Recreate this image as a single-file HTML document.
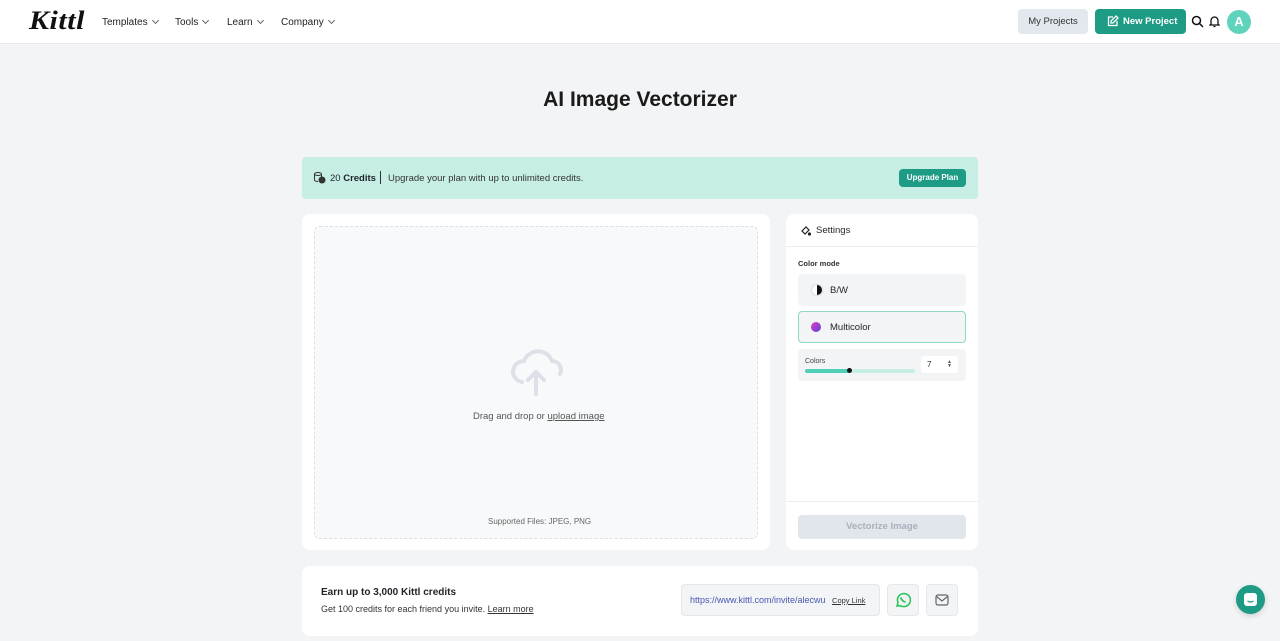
<!DOCTYPE html>
<html><head><meta charset="utf-8"><style>
*{box-sizing:border-box;margin:0;padding:0}
body{width:1280px;height:641px;overflow:hidden;background:#f3f4f6;font-family:"Liberation Sans",sans-serif;color:#1f2328;position:relative}
.nav{position:absolute;top:0;left:0;width:1280px;height:44px;background:#fff;border-bottom:1px solid #e5e7eb}
.abs{position:absolute}
.menu{font-size:10px;color:#222;top:16px}
.chev{display:inline-block;width:5px;height:5px;border-right:1px solid #666;border-bottom:1px solid #666;transform:rotate(45deg);margin-left:5px;position:relative;top:-2px}
.card{background:#fff;border-radius:8px;position:absolute}
</style></head><body>
<div class="nav">
<div class="abs" style="left:29px;top:6px;font-family:'Liberation Serif',serif;font-style:italic;font-weight:bold;font-size:26px;letter-spacing:0.5px;color:#111;transform:scaleX(1.15);transform-origin:left">Kittl</div>
<div class="abs menu" style="left:102px;top:17px">Templates<span class="chev"></span></div>
<div class="abs menu" style="left:175px;top:17px">Tools<span class="chev"></span></div>
<div class="abs menu" style="left:227px;top:17px">Learn<span class="chev"></span></div>
<div class="abs menu" style="left:281px;top:17px">Company<span class="chev"></span></div>
<div class="abs" style="left:1018px;top:9px;width:70px;height:25px;background:#e3e7ee;border-radius:4px;font-size:9.5px;text-align:center;line-height:25px;color:#333">My Projects</div>
<div class="abs" style="left:1095px;top:9px;width:91px;height:25px;background:#1d9b85;border-radius:4px;font-size:9.5px;font-weight:bold;color:#fff;line-height:25px;padding-left:28px">New Project</div>
<svg class="abs" style="left:1107px;top:15px" width="12" height="12" viewBox="0 0 12 12" fill="none" stroke="#fff" stroke-width="1.3"><path d="M10 6v4.5H1.5V2H6"/><path d="M9 1l2 2-5 5H4V6z"/></svg>
<svg class="abs" style="left:1191px;top:15px" width="13" height="13" viewBox="0 0 13 13" fill="none" stroke="#111" stroke-width="1.5"><circle cx="5.5" cy="5.5" r="4"/><path d="M8.5 8.5l3.5 3.5"/></svg>
<svg class="abs" style="left:1209px;top:15px" width="11" height="13" viewBox="0 0 11 13" fill="none" stroke="#111" stroke-width="1.3"><path d="M2 9V5.5a3.5 3.5 0 017 0V9l1 1H1z"/><path d="M4.5 11.5h2"/></svg>
<div class="abs" style="left:1227px;top:10px;width:24px;height:24px;border-radius:50%;background:#5fd3bb;color:#fff;font-weight:bold;font-size:13px;text-align:center;line-height:24px">A</div>
</div>
<div class="abs" style="left:0;width:1280px;top:88px;text-align:center;font-size:21px;font-weight:bold;color:#1a1a1a">AI Image Vectorizer</div>
<div class="abs" style="left:302px;top:157px;width:676px;height:42px;background:#c6eee4;border-radius:4px"></div>
<svg class="abs" style="left:313px;top:171px" width="13" height="13" viewBox="0 0 13 13" fill="none" stroke="#333" stroke-width="1"><ellipse cx="5" cy="3" rx="3.5" ry="1.5"/><path d="M1.5 3v6c0 .8 1.5 1.5 3.5 1.5M8.5 3v3"/><circle cx="9" cy="9" r="3" fill="#333"/></svg>
<div class="abs" style="left:330px;top:173px;font-size:9.5px">20 <b>Credits</b></div>
<div class="abs" style="left:380px;top:171px;width:1px;height:13px;background:#333"></div>
<div class="abs" style="left:388px;top:173px;font-size:9.5px;color:#333">Upgrade your plan with up to unlimited credits.</div>
<div class="abs" style="left:899px;top:169px;width:67px;height:18px;background:#1d9b85;border-radius:4px;color:#fff;font-size:8px;font-weight:bold;text-align:center;line-height:18px">Upgrade Plan</div>
<div class="card" style="left:302px;top:214px;width:468px;height:336px"></div>
<div class="abs" style="left:314px;top:226px;width:444px;height:313px;border:1px dashed #dde0e5;border-radius:6px;background:#f8f9fa"></div>
<svg class="abs" style="left:510px;top:348px" width="54" height="48" viewBox="0 0 54 48" fill="none" stroke="#dde1e7" stroke-width="4" stroke-linecap="round"><path d="M12 34A11 11 0 013 24a11 11 0 0111-11 15 15 0 0128 0 9 9 0 018 13"/><path d="M26 46V25M18 32l8-8 8 8"/></svg>
<div class="abs" style="left:473px;top:411px;font-size:9.5px;color:#555">Drag and drop or <u>upload image</u></div>
<div class="abs" style="left:488px;top:517px;font-size:8px;color:#666">Supported Files: JPEG, PNG</div>
<div class="card" style="left:786px;top:214px;width:192px;height:336px"></div>
<div class="abs" style="left:786px;top:246px;width:192px;height:1px;background:#eceef1"></div>
<svg class="abs" style="left:800px;top:225px" width="11" height="11" viewBox="0 0 11 11" fill="none" stroke="#222" stroke-width="1.2"><path d="M2 6l4-4 3 3-4 4z"/><circle cx="9.5" cy="9" r="1" fill="#222"/></svg>
<div class="abs" style="left:816px;top:225px;font-size:9.5px">Settings</div>
<div class="abs" style="left:798px;top:259px;font-size:7.5px;font-weight:bold;color:#333">Color mode</div>
<div class="abs" style="left:798px;top:274px;width:168px;height:32px;background:#f3f4f6;border-radius:4px"></div>
<div class="abs" style="left:812px;top:285px;width:10px;height:10px;border-radius:50%;background:linear-gradient(90deg,#fff 50%,#111 50%);box-shadow:0 0 2px #aaa"></div>
<div class="abs" style="left:830px;top:285px;font-size:9.5px">B/W</div>
<div class="abs" style="left:798px;top:311px;width:168px;height:32px;background:#f3f4f6;border:1px solid #8dd8c7;border-radius:4px"></div>
<div class="abs" style="left:811px;top:322px;width:10px;height:10px;border-radius:50%;background:linear-gradient(135deg,#e040c0,#6040e0)"></div>
<div class="abs" style="left:830px;top:322px;font-size:9.5px">Multicolor</div>
<div class="abs" style="left:798px;top:349px;width:168px;height:32px;background:#f3f4f6;border-radius:4px"></div>
<div class="abs" style="left:805px;top:358px;font-size:7px;color:#444">Colors</div>
<div class="abs" style="left:805px;top:369px;width:110px;height:4px;background:#c6eee4;border-radius:2px"></div>
<div class="abs" style="left:805px;top:369px;width:44px;height:4px;background:#4fcfb5;border-radius:2px"></div>
<div class="abs" style="left:847px;top:368px;width:5px;height:5px;background:#111;border-radius:50%"></div>
<div class="abs" style="left:921px;top:356px;width:37px;height:17px;background:#fff;border-radius:3px;font-size:8px;padding:4px 6px">7<span style="float:right;font-size:5px;line-height:4px;color:#555">▲<br>▼</span></div>
<div class="abs" style="left:786px;top:501px;width:192px;height:1px;background:#eceef1"></div>
<div class="abs" style="left:798px;top:515px;width:168px;height:24px;background:#e1e5ec;border-radius:4px;color:#a9b0bb;font-size:9.5px;font-weight:bold;text-align:center;line-height:24px">Vectorize Image</div>
<div class="card" style="left:302px;top:566px;width:676px;height:70px"></div>
<div class="abs" style="left:321px;top:587px;font-size:10px;font-weight:bold">Earn up to 3,000 Kittl credits</div>
<div class="abs" style="left:321px;top:604px;font-size:9px;color:#333">Get 100 credits for each friend you invite. <u>Learn more</u></div>
<div class="abs" style="left:681px;top:584px;width:199px;height:32px;background:#f3f4f6;border:1px solid #e5e7eb;border-radius:4px;font-size:9px;color:#4a58b0;line-height:30px;padding-left:8px">https://www.kittl.com/invite/alecwu <u style="color:#333;font-size:7.5px;margin-left:4px">Copy Link</u></div>
<div class="abs" style="left:887px;top:584px;width:32px;height:32px;background:#f3f4f6;border:1px solid #e5e7eb;border-radius:4px"></div>
<svg class="abs" style="left:895px;top:592px" width="16" height="16" viewBox="0 0 16 16" fill="none" stroke="#2bc55a" stroke-width="1.6"><path d="M2 14l1-3.3A6.5 6.5 0 118 14.5a6.5 6.5 0 01-3-.8z"/><path d="M6 5.5c0 2 2.5 4.5 4.5 4.5" stroke-width="1.8"/></svg>
<div class="abs" style="left:926px;top:584px;width:32px;height:32px;background:#f3f4f6;border:1px solid #e5e7eb;border-radius:4px"></div>
<svg class="abs" style="left:935px;top:594px" width="14" height="12" viewBox="0 0 14 12" fill="none" stroke="#666" stroke-width="1.2"><rect x="1" y="1" width="12" height="10" rx="2"/><path d="M1.5 2.5L7 7l5.5-4.5"/></svg>
<div class="abs" style="left:1236px;top:585px;width:29px;height:29px;border-radius:50%;background:#1d9b85;box-shadow:0 2px 6px rgba(0,0,0,.15)"></div>
<svg class="abs" style="left:1244px;top:593px" width="13" height="13" viewBox="0 0 13 13"><rect x="0" y="0" width="13" height="13" rx="3" fill="#fff"/><path d="M3.5 8q3 2 6 0" stroke="#1d9b85" stroke-width="1.2" fill="none"/></svg>
</body></html>
